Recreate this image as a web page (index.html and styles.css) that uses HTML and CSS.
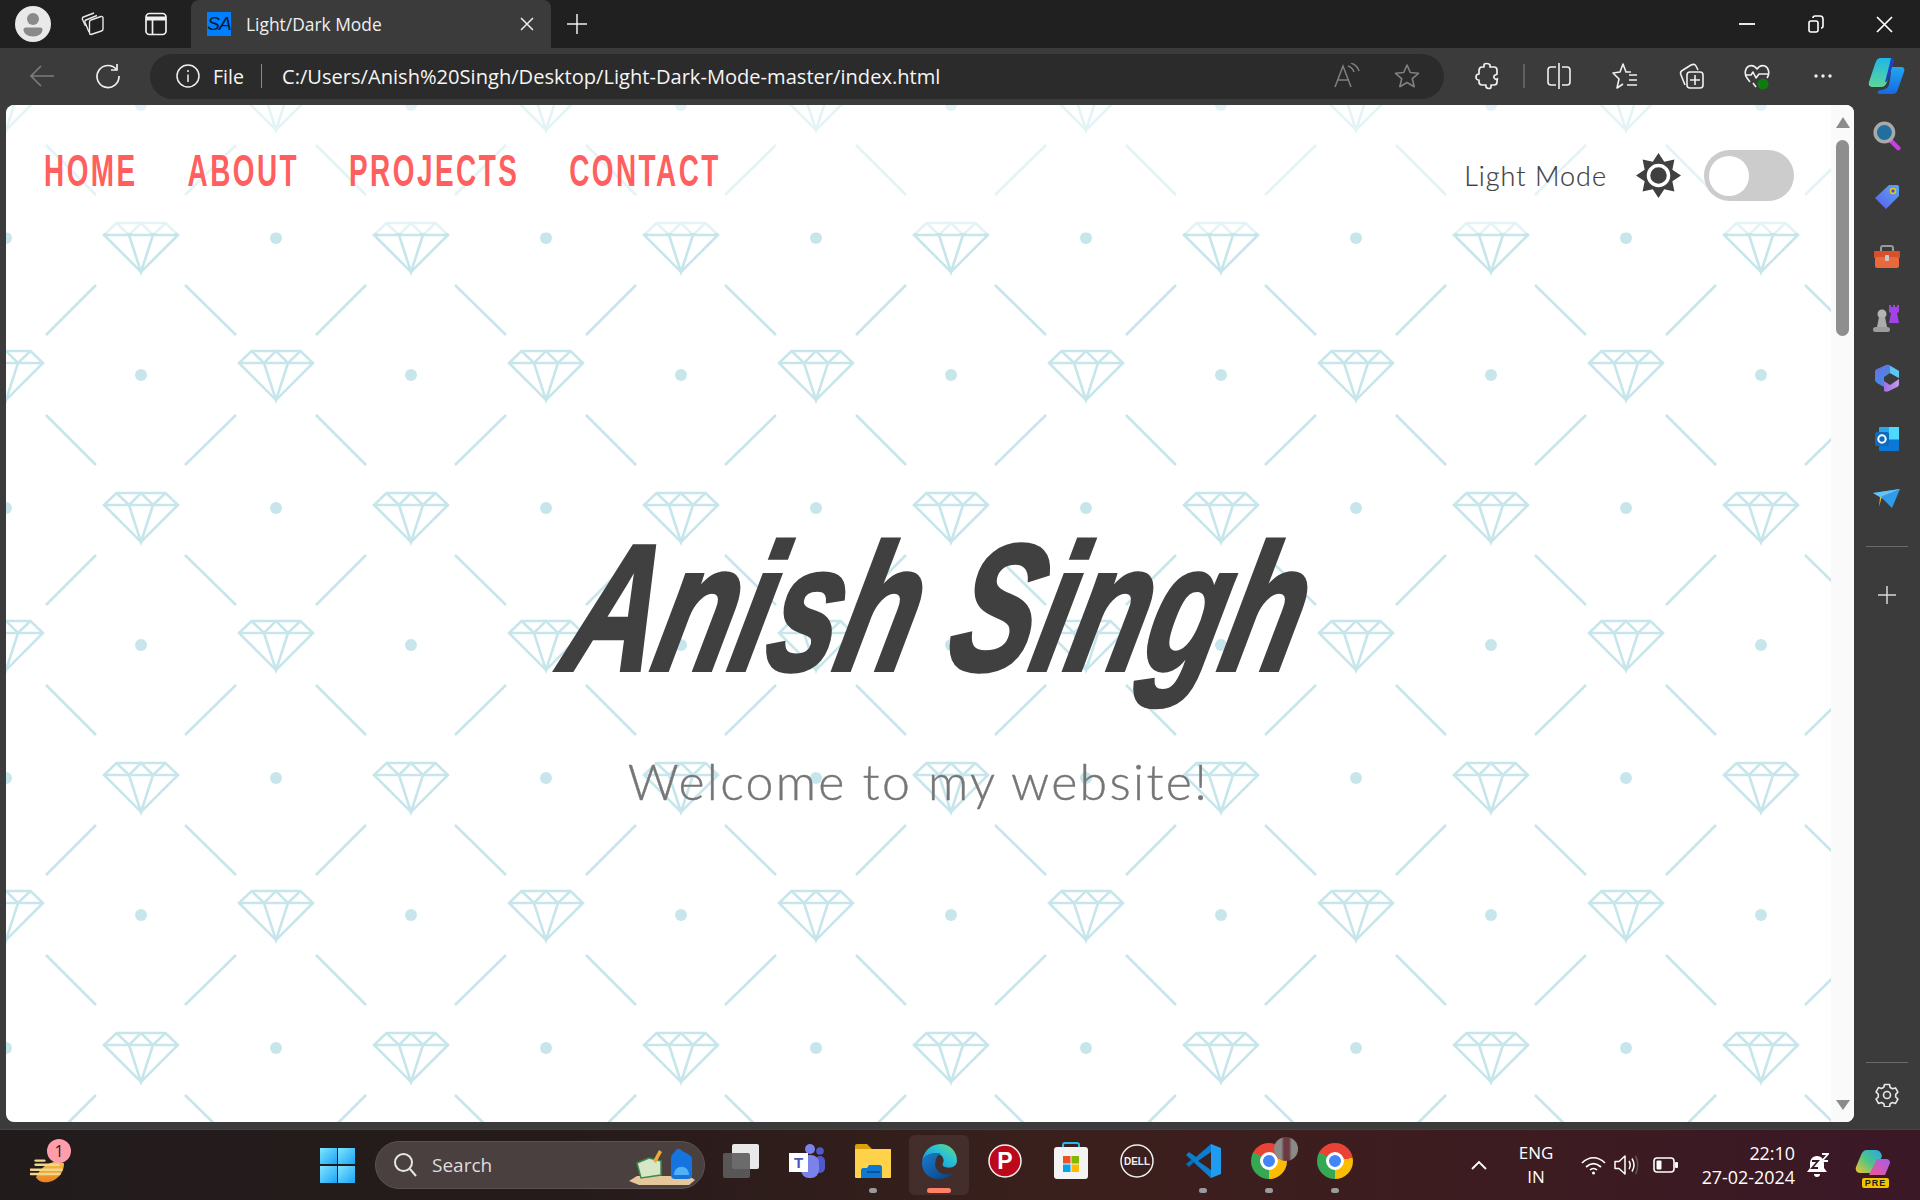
FILE: index.html
```html
<!DOCTYPE html>
<html lang="en">
<head>
<meta charset="utf-8">
<title>Light/Dark Mode</title>
<link rel="stylesheet" href="styles.css">
</head>
<body>
<div class="window">
  <header class="tabbar">
    <div class="avatar"><svg width="36" height="36" viewBox="0 0 36 36"><circle cx="18" cy="18" r="18" fill="#e9e9e9"/><circle cx="18" cy="13" r="6" fill="#8a8a8a"/><path d="M8.500 23.500a2 2 0 0 1 2-2h15a2 2 0 0 1 2 2c0 4-4 7-9.500 7s-9.500-3-9.500-7z" fill="#8a8a8a"/></svg></div>
    <div class="slot w48 ml18"><svg width="24" height="24" viewBox="0 0 24 24" fill="none" stroke="#e8e8e8" stroke-width="1.400" stroke-linejoin="round"><path d="M10 22.500 20.500 19a2 2 0 0 0 1.500-2V6a1.500 1.500 0 0 0-2-1.500L10 8a2 2 0 0 0-1.500 2v11a1.500 1.500 0 0 0 1.500 1.500z"/><path d="M8 20 4 10.500c-.5-1 0-2 1-2.500L16 3.500"/><path d="M4.500 14 1.500 7.500c-.5-1 0-2 1-2.500L13 1"/></svg></div>
    <div class="slot w48 ml15"><svg width="22" height="24" viewBox="0 0 22 24" fill="none" stroke="#f0f0f0" stroke-width="1.700"><rect x="1" y="1.500" width="20" height="21" rx="3.500"/><path d="M1 6.500h20" stroke-width="4"/><path d="M7.500 7v15"/></svg></div>
    <div class="tab">
      <span class="favicon">SA</span>
      <span class="tab-title">Light/Dark Mode</span>
      <span class="slot w24"><svg width="14" height="14" viewBox="0 0 14 14" stroke="#eee" stroke-width="1.500"><path d="M1 1l12 12M13 1 1 13"/></svg></span>
    </div>
    <div class="slot w40 ml6"><svg width="22" height="22" viewBox="0 0 22 22" stroke="#eee" stroke-width="1.500"><path d="M11 1v20M1 11h20"/></svg></div>
    <div class="winctrls">
      <div class="slot w69"><svg width="16" height="16" viewBox="0 0 16 16" stroke="#fff" stroke-width="1.800"><path d="M0 8h16"/></svg></div>
      <div class="slot w69"><svg width="16" height="18" viewBox="0 0 16 18" fill="none" stroke="#fff" stroke-width="1.600"><rect x="1" y="6" width="9" height="11" rx="2"/><path d="M5 3c0-1 1-2 2-2h5c2 0 3 1 3 3v7c0 1-1 2-2 2"/></svg></div>
      <div class="slot w69"><svg width="17" height="17" viewBox="0 0 17 17" stroke="#fff" stroke-width="1.700"><path d="M1 1l15 15M16 1 1 16"/></svg></div>
    </div>
  </header>

  <nav class="toolbar">
    <div class="slot w66 ml9"><svg width="26" height="26" viewBox="0 0 26 26" fill="none" stroke="#7d7d7d" stroke-width="1.600"><path d="M25 13H2M12 3 2 13l10 10"/></svg></div>
    <div class="slot w66"><svg width="26" height="26" viewBox="0 0 26 26" fill="none" stroke="#f0f0f0" stroke-width="1.700"><path d="M21.500 6.500A11 11 0 1 0 24 13"/><path d="M22 1v6h-6"/></svg></div>
    <div class="address">
      <svg class="info" width="24" height="24" viewBox="0 0 24 24" fill="none" stroke="#f0f0f0" stroke-width="1.500"><circle cx="12" cy="12" r="11"/><path d="M12 10.500V18M12 6v2"/></svg>
      <span class="file">File</span>
      <span class="addr-sep"></span>
      <span class="url">C:/Users/Anish%20Singh/Desktop/Light-Dark-Mode-master/index.html</span>
      <span class="slot w60 push"><svg width="26" height="26" viewBox="0 0 26 26" fill="none" stroke="#808080" stroke-width="1.500"><path d="M1 24 9 3l8 21M4 17h10"/><path d="M14 3c3 1 5 3 6 6M17 0c4 1.500 7 4 8 8" /></svg></span>
      <span class="slot w60"><svg width="26" height="26" viewBox="0 0 26 26" fill="none" stroke="#808080" stroke-width="1.600" stroke-linejoin="round"><path d="m13 2 3.300 7.500 8.200.8-6.200 5.400 1.900 8L13 19.500l-7.200 4.200 1.900-8-6.200-5.400 8.200-.8z"/></svg></span>
    </div>
    <div class="slot w66 ml10"><svg width="24" height="28" viewBox="0 0 24 28" fill="none" stroke="#f0f0f0" stroke-width="1.700" stroke-linejoin="round"><path d="M9 3c0-2 5-2 6 0v2h4c2 0 3 1 3 3v4c0 1-2 0-3 2s2 4 3 3 0 0 0 3c0 2-1 3-3 3h-3v2c0 2-4 2-5 0v-2H7c-2 0-3-1-3-3v-2c-2 0-3-1-3-3s1-3 3-3V9c0-2 1-4 3-4h2z"/></svg></div>
    <span class="bar-sep"></span>
    <div class="slot w66"><svg width="24" height="28" viewBox="0 0 24 28" fill="none" stroke="#f0f0f0" stroke-width="1.600"><path d="M9 5H4a3 3 0 0 0-3 3v12a3 3 0 0 0 3 3h5M15 5h5a3 3 0 0 1 3 3v12a3 3 0 0 1-3 3h-5M12 1v26"/></svg></div>
    <div class="slot w66"><svg width="26" height="28" viewBox="0 0 26 28" fill="none" stroke="#f0f0f0" stroke-width="1.600" stroke-linejoin="round"><path d="M19 10h-5L11 2 8 10l-7 1 6 6-2 9 6-4"/><path d="M17 13h8M17 18h8M15 23h10"/></svg></div>
    <div class="slot w66"><svg width="26" height="28" viewBox="0 0 26 28" fill="none" stroke="#f0f0f0" stroke-width="1.600" stroke-linejoin="round"><path d="M7 23 3 13c-1-2 0-4 2-5l8-5c2-1 4-1 5 1l2 4"/><rect x="9" y="10" width="16" height="16" rx="3"/><path d="M17 13v10M12 18h10"/></svg></div>
    <div class="slot w66"><svg width="26" height="28" viewBox="0 0 26 28" fill="none" stroke="#f0f0f0" stroke-width="1.600" stroke-linejoin="round"><path d="M6 20 3 16C0 12 1 6 5 4c3-1 6 0 8 3 2-3 5-4 8-3 4 2 5 8 2 12"/><path d="M1 13h6l2-3 3 6 3-4h9M9 21l3 4"/><circle cx="19" cy="22" r="5.500" fill="#107c10" stroke="none"/></svg></div>
    <div class="slot w66"><svg width="18" height="4" viewBox="0 0 18 4" fill="#f0f0f0"><circle cx="2" cy="2" r="1.700"/><circle cx="9" cy="2" r="1.700"/><circle cx="16" cy="2" r="1.700"/></svg></div>
    <div class="slot w60"><svg width="37" height="38" viewBox="0 0 37 38"><defs><linearGradient id="cpA" x1="0" y1="0" x2="0" y2="1"><stop offset="0" stop-color="#1fb6e6"/><stop offset="1" stop-color="#5ed69a"/></linearGradient><linearGradient id="cpB" x1="0" y1="0" x2="0" y2="1"><stop offset="0" stop-color="#21a8ef"/><stop offset="1" stop-color="#1668e3"/></linearGradient></defs><path d="M12 1h10c3 0 4 2 3 5l-6 19c-1 3-3 5-6 5H5c-3 0-5-2-4-5L7 7c1-4 3-6 5-6z" fill="url(#cpA)"/><path d="M20 10h13c3 0 4 2 3 5l-6 17c-1 4-3 5-6 5H12c-2 0-3-2-2-3l7-2c2-1 3-2 4-4l2-12z" fill="url(#cpB)"/><path d="M23 1c3 0 3 3 2 6l-4 13c-1 3-2 5-4 5l4-15z" fill="#1c3fc8"/></svg></div>
  </nav>

  <div class="workarea">
    <div class="viewport">
      <main class="page">
        <svg class="pattern" aria-hidden="true">
          <defs>
            <g id="gem" fill="none" stroke="#c6e6ec" stroke-width="2.600">
              <path d="M-24.500 1H24.500L37 13 0 50-37 13zM-37 13H37"/>
              <path d="M-24.500 1-12 13 0 1 12 13 24.500 1M-12 13 0 50 12 13"/>
            </g>
            <pattern id="tile" width="270" height="270" patternUnits="userSpaceOnUse">
              <g fill="#c6e6ec">
                <circle cx="135" cy="0" r="6"/><circle cx="135" cy="270" r="6"/>
                <circle cx="0" cy="133" r="6"/><circle cx="270" cy="133" r="6"/>
              </g>
              <g fill="none" stroke="#c6e6ec" stroke-width="2.600">
                <path d="M40 230 90 180M179 180 230 230M40 40 90 90M179 90 230 40"/>
              </g>
              <use href="#gem" x="135" y="117"/>
              <use href="#gem" x="0" y="245"/><use href="#gem" x="270" y="245"/>
              <use href="#gem" x="0" y="-25"/><use href="#gem" x="270" y="-25"/>
            </pattern>
          </defs>
          <rect width="100%" height="100%" fill="url(#tile)"/>
        </svg>
        <div class="site-nav">
          <ul class="links">
            <li>HOME</li><li>ABOUT</li><li>PROJECTS</li><li>CONTACT</li>
          </ul>
          <div class="theme">
            <span class="theme-label">Light Mode</span>
            <svg class="sun" width="45" height="45" viewBox="0 0 45 45"><polygon fill="#404040" points="22.500,0 28.240,8.640 38.410,6.590 36.360,16.760 45,22.500 36.360,28.240 38.410,38.410 28.240,36.360 22.500,45 16.760,36.360 6.590,38.410 8.640,28.240 0,22.500 8.640,16.760 6.590,6.590 16.760,8.640"/><circle cx="22.500" cy="22.500" r="10" fill="#404040" stroke="#fff" stroke-width="3.500"/></svg>
            <span class="switch"><span class="knob"></span></span>
          </div>
        </div>
        <section class="hero">
          <h1 class="name">Anish Singh</h1>
          <p class="welcome">Welcome to my website!</p>
        </section>
      </main>
      <aside class="scrollbar">
        <span class="arrow-up"></span>
        <span class="thumb"></span>
        <span class="arrow-down"></span>
      </aside>
    </div>
    <aside class="sidebar">
      <div class="side-slot"><svg width="28" height="30" viewBox="0 0 32 34"><path d="m20 22 9 9" stroke="#c93fe0" stroke-width="5" stroke-linecap="round"/><circle cx="13" cy="13" r="10.500" fill="#1f6f9f" stroke="#a9a9a9" stroke-width="4"/></svg></div>
      <div class="side-slot"><svg width="26" height="26" viewBox="0 0 26 26"><defs><linearGradient id="tagG" x1="1" y1="0" x2="0" y2="1"><stop offset="0" stop-color="#58a8f0"/><stop offset="1" stop-color="#5b5cf0"/></linearGradient></defs><path d="M15 1h8a2 2 0 0 1 2 2v9L12 25 1 14z" fill="url(#tagG)"/><circle cx="19" cy="7" r="2.500" fill="#315bd8" stroke="#f6c700" stroke-width="1.500"/></svg></div>
      <div class="side-slot"><svg width="28" height="24" viewBox="0 0 28 24"><path d="M8 6V3a2 2 0 0 1 2-2h8a2 2 0 0 1 2 2v3" fill="none" stroke="#9a9a9a" stroke-width="2"/><rect x="1" y="6" width="26" height="7" rx="1" fill="#d8502a"/><rect x="2" y="12" width="24" height="11" rx="2" fill="#e9683c"/><rect x="12" y="10" width="4" height="6" rx="1" fill="#c8c8c8"/></svg></div>
      <div class="side-slot"><svg width="30" height="30" viewBox="0 0 30 30"><circle cx="10" cy="11" r="4.500" fill="#b4b4b4"/><path d="M7 14h6l2 10H5z" fill="#acacac"/><rect x="1" y="24" width="17" height="5" rx="2.500" fill="#9c9c9c"/><path d="M17 2h2v2h2V2h2v2h2V2h2v7l-2 1 2 10H17l2-10-2-1z" fill="#a243ea"/></svg></div>
      <div class="side-slot"><svg width="26" height="28" viewBox="0 0 26 28"><defs><linearGradient id="msA" x1="0" y1="0" x2="1" y2="1"><stop offset="0" stop-color="#6f6be0"/><stop offset="1" stop-color="#2aa2e8"/></linearGradient><linearGradient id="msB" x1="0" y1="0" x2="1" y2="0"><stop offset="0" stop-color="#a06ee8"/><stop offset="1" stop-color="#c49be8"/></linearGradient></defs><path d="M3 5 12 1c2-.5 3 0 5 1l8 5v7l-9-5-6 4v10l-7-4c-1-1-2-2-2-3V9c0-2 0-3 2-4z" fill="url(#msA)"/><path d="M10 17l6 4 9-6v5c0 1-1 3-2 3l-8 4c-2 1-3 1-5 0z" fill="url(#msB)"/><path d="M16 2l9 5v7l-9-5z" fill="#5cc8ee"/></svg></div>
      <div class="side-slot"><svg width="26" height="26" viewBox="0 0 26 26"><rect x="5" y="1" width="20" height="14" rx="1" fill="#28a8ea"/><path d="M15 1h10v12H15z" fill="#50d9ff"/><path d="M5 14h20v10a1 1 0 0 1-1 1H6a1 1 0 0 1-1-1z" fill="#0a78d4"/><rect x="1" y="6" width="14" height="14" rx="1.500" fill="#0f6cbd"/><circle cx="8" cy="13" r="3.700" fill="none" stroke="#fff" stroke-width="2"/></svg></div>
      <div class="side-slot"><svg width="28" height="20" viewBox="0 0 28 20"><path d="M0 4 27 0 19 19 10 10z" fill="#2f9bea"/><path d="M0 4 27 0 7 8z" fill="#64c5f5"/><path d="M7 8 27 0 9 7 6 18z" fill="#f2b71c"/></svg></div>
      <hr class="side-sep">
      <div class="side-slot plus"><svg width="18" height="18" viewBox="0 0 18 18" stroke="#d8d8d8" stroke-width="1.500"><path d="M9 0v18M0 9h18"/></svg></div>
      <hr class="side-sep bottom">
      <div class="side-slot"><svg width="24" height="24" viewBox="0 0 24 24" fill="none" stroke="#e8e8e8" stroke-width="1.600" stroke-linejoin="round"><circle cx="12" cy="12" r="3.500"/><path d="M9.500 1.500h5l.7 3 2.300 1.300 3-.9 2.400 4.300-2.200 2.100v2.700l2.200 2.100-2.400 4.300-3-.9-2.300 1.300-.7 3h-5l-.7-3-2.300-1.300-3 .9-2.400-4.300 2.200-2.100v-2.700L1.100 8.900l2.400-4.300 3 .9 2.300-1.300z"/></svg></div>
    </aside>
  </div>

  <footer class="taskbar">
    <div class="weather">
      <svg width="36" height="28" viewBox="0 0 36 40" preserveAspectRatio="none"><defs><linearGradient id="wxG" x1="0" y1="0" x2="0" y2="1"><stop offset="0" stop-color="#f6c24c"/><stop offset="1" stop-color="#ec7f1d"/></linearGradient></defs><path d="M14 39C24 40 34 28 34 12c-8-6-22 0-28 20 2 4 4 6 8 7z" fill="url(#wxG)"/><path d="M6 8h8M6 14h22M1 21h30M1 27h28" stroke="#f1d78c" stroke-width="3.500" stroke-linecap="round"/></svg>
      <span class="badge">1</span>
    </div>
    <div class="winlogo"><i></i><i></i><i></i><i></i></div>
    <div class="search">
      <svg width="24" height="26" viewBox="0 0 24 26" fill="none" stroke="#e6e6e6" stroke-width="2"><circle cx="10.500" cy="10.500" r="8.500"/><path d="m17 17 6 7"/></svg>
      <span class="search-text">Search</span>
      <svg class="search-art" width="66" height="40" viewBox="0 0 66 40"><path d="M8 29h52l6 4-6 5H10l-10-4z" fill="#e6c79c"/><path d="M8 16 20 11l12 3v14l-20 3z" fill="#d8e6c8" stroke="#3d8a4e" stroke-width="1.500"/><path d="M24 14 30 3l3 2-6 11z" fill="#f0a836"/><path d="M42 28V12c0-5 4-7 6-10h3c2 3 12 5 12 10v16c0 3-2 4-4 4H46c-2 0-4-1-4-4z" fill="#1674e0"/><path d="M45 28c0-11 15-11 15 0z" fill="#52b0f5"/></svg>
    </div>
    <div class="apps">
      <div class="app"><svg width="38" height="36" viewBox="0 0 38 36"><rect x="10" y="1" width="27" height="25" rx="2" fill="#e9e9e9"/><rect x="1" y="10" width="27" height="25" rx="2" fill="#5d5d5d" fill-opacity=".9"/></svg></div>
      <div class="app"><svg width="36" height="34" viewBox="0 0 36 34"><circle cx="21" cy="5" r="5" fill="#7b83eb"/><circle cx="31" cy="7" r="3.800" fill="#5059c9"/><rect x="26" y="12" width="10" height="17" rx="5" fill="#5059c9"/><rect x="12" y="11" width="18" height="23" rx="8" fill="#7b83eb"/><rect x="0" y="9" width="19" height="19" fill="#fff"/><text x="9.500" y="24" class="teams-t">T</text></svg></div>
      <div class="app is-open"><svg width="36" height="34" viewBox="0 0 36 34"><path d="M0 2a2 2 0 0 1 2-2h10l5 5h19v6H0z" fill="#d9a20c"/><rect y="5" width="36" height="29" rx="1" fill="#ffd24a"/><path d="M6 34V26c0-1 1-2 2-2h4l2-3h11c1 0 2 1 2 2v11z" fill="#0f78d0"/><rect x="12" y="27" width="13" height="2" fill="#0a4f9c"/></svg></div>
      <div class="app active"><svg width="37" height="37" viewBox="0 0 36 36"><defs><linearGradient id="edT" x1="0" y1="1" x2="1" y2="0"><stop offset="0" stop-color="#0f86d6"/><stop offset=".6" stop-color="#2bc3d4"/><stop offset="1" stop-color="#6fdb6a"/></linearGradient><linearGradient id="edB" x1="0" y1="0" x2="1" y2="1"><stop offset="0" stop-color="#1a7cd0"/><stop offset="1" stop-color="#0b3f80"/></linearGradient></defs><path d="M1 20C1 9 9 1 19 1c9 0 16 7 16 16 0 5-4 7-8 7-3 0-6-1-6-3 0-1 1-2 1-4 0-4-4-7-8-7C8 10 1 14 1 20z" fill="url(#edT)"/><path d="M1 20c0 9 7 15 16 15 6 0 11-2 14-6-3 2-7 2-10 1-5-2-8-6-7-11 0-4 2-7 5-9C10 9 1 12 1 20z" fill="url(#edB)"/></svg></div>
      <div class="app"><svg width="34" height="34" viewBox="0 0 34 34"><circle cx="17" cy="17" r="16" fill="#bd081c" stroke="#f2f2f2" stroke-width="1.500"/><text x="17" y="25" class="pin-p">P</text></svg></div>
      <div class="app"><svg width="36" height="38" viewBox="0 0 36 38"><path d="M10 7V3a2 2 0 0 1 2-2h12a2 2 0 0 1 2 2v4" fill="none" stroke="#2db7ed" stroke-width="2"/><rect x="1" y="5" width="34" height="32" rx="3" fill="#f3f3f3"/><rect x="10" y="14" width="7.500" height="7.500" fill="#f25022"/><rect x="18.500" y="14" width="7.500" height="7.500" fill="#7fba00"/><rect x="10" y="22.500" width="7.500" height="7.500" fill="#00a4ef"/><rect x="18.500" y="22.500" width="7.500" height="7.500" fill="#ffb900"/></svg></div>
      <div class="app"><svg width="34" height="34" viewBox="0 0 34 34"><circle cx="17" cy="17" r="16" fill="none" stroke="#f0f0f0" stroke-width="1.500"/><text x="17" y="21" class="dell">DELL</text></svg></div>
      <div class="app is-open"><svg width="36" height="36" viewBox="0 0 36 36"><path d="M26 1 36 5v26l-10 4L10 20z" fill="#1f9cf0"/><path d="M26 1v34L1 12l3-3 7 5z" fill="#0a7ed0"/><path d="M10 18 4 24l-3-3 5-4z" fill="#0a6fb8"/><path d="M26 9 13 18l13 9z" fill="#3a2120"/></svg></div>
      <div class="app is-open"><span class="chrome"><span class="chrome-eye"></span></span><span class="thumb-badge"></span></div>
      <div class="app is-open"><span class="chrome"><span class="chrome-eye"></span></span></div>
    </div>
    <div class="tray">
      <div class="slot w34"><svg width="16" height="10" viewBox="0 0 16 10" fill="none" stroke="#fff" stroke-width="1.800"><path d="m1 9 7-7 7 7"/></svg></div>
      <div class="lang ml14"><span>ENG</span><span>IN</span></div>
      <div class="slot w34 ml14"><svg width="25" height="19" viewBox="0 0 25 19" fill="none" stroke="#fff" stroke-width="1.700"><path d="M1 7c7-7 16-7 23 0M5 11c5-4.500 10-4.500 15 0M9 14c2-2 5-2 7 0"/><circle cx="12.500" cy="17" r="1.500" fill="#fff" stroke="none"/></svg></div>
      <div class="slot w34"><svg width="26" height="22" viewBox="0 0 26 22" fill="none" stroke="#fff" stroke-width="1.500" stroke-linejoin="round"><path d="M1 7.500h4L11 2v18l-6-5.500H1zM15 7c1.500 2.500 1.500 5.500 0 8M18 4.500c2.500 4 2.500 9 0 13"/><path d="M21.500 2c3 5 3 13 0 18" stroke="#6a5058"/></svg></div>
      <div class="slot w34 ml4"><svg width="25" height="16" viewBox="0 0 25 16"><rect x="1" y="1" width="20" height="14" rx="3" fill="none" stroke="#fff" stroke-width="1.600"/><rect x="3.500" y="3.500" width="5" height="9" rx="1" fill="#fff"/><rect x="22" y="5" width="3" height="6" rx="1" fill="#fff"/></svg></div>
      <div class="clock ml13"><span>22:10</span><span>27-02-2024</span></div>
      <div class="slot w34 ml6"><svg width="22" height="26" viewBox="0 0 22 26"><path d="M10 4c5 0 7 4 7 8v4l3 4H0l3-4v-4c0-4 2-8 7-8z" fill="#fff"/><path d="M7 22h6a3 3 0 0 1-6 0z" fill="#fff"/><path d="M15 2h6l-6 7h6" fill="none" stroke="#fff" stroke-width="1.800"/><path d="M5 9h6l-6 7h6" fill="none" stroke="#3a1a26" stroke-width="1.800"/></svg></div>
      <div class="copilot ml18"><svg width="36" height="32" viewBox="0 0 36 32"><defs><linearGradient id="cpC" x1="0" y1="1" x2="1" y2="0"><stop offset="0" stop-color="#f5c22e"/><stop offset=".5" stop-color="#4dc488"/><stop offset="1" stop-color="#2aa6e8"/></linearGradient><linearGradient id="cpD" x1="0" y1="1" x2="1" y2="0"><stop offset="0" stop-color="#f0568c"/><stop offset="1" stop-color="#a45df0"/></linearGradient></defs><path d="M12 1h9c3 0 5 2 6 6l-7 17H5c-3 0-5-3-4-6L6 6c1-3 3-5 6-5z" fill="url(#cpC)"/><path d="M22 10h9c3 0 4 2 4 4l-5 12H14z" fill="url(#cpD)"/></svg><span class="pre">PRE</span></div>
    </div>
  </footer>
</div>
</body>
</html>
```
FILE: styles.css
```css
* { box-sizing: border-box; }
html, body { margin: 0; padding: 0; }
body { font-family: "Open Sans", "Noto Sans", sans-serif; background: #3b3b3b; overflow: hidden; }
.window { width: 1920px; height: 1200px; display: flex; flex-direction: column; }

.slot { display: flex; align-items: center; justify-content: center; flex: none; }
.w24 { width: 24px; } .w34 { width: 34px; } .w40 { width: 40px; } .w48 { width: 48px; }
.w60 { width: 60px; } .w66 { width: 66px; } .w69 { width: 69px; }
.ml4 { margin-left: 4px; } .ml6 { margin-left: 6px; } .ml9 { margin-left: 9px; } .ml10 { margin-left: 10px; }
.ml13 { margin-left: 13px; } .ml14 { margin-left: 14px; } .ml15 { margin-left: 15px; } .ml18 { margin-left: 18px; }

/* tab strip */
.tabbar { height: 48px; flex: none; background: #202020; display: flex; align-items: center; padding-left: 15px; }
.avatar { width: 36px; height: 36px; flex: none; }
.tab { margin-left: 11px; width: 360px; height: 48px; background: #3b3b3b; border-radius: 8px 8px 0 0; display: flex; align-items: center; padding: 0 12px 0 16px; }
.favicon { width: 24px; height: 24px; background: #0080ff; color: #001a33; font: italic 19px/24px "Liberation Sans", sans-serif; text-align: center; letter-spacing: -1px; flex: none; }
.tab-title { flex: 1; margin-left: 15px; color: #f0f0f0; font-size: 17.400px; }
.winctrls { margin-left: auto; display: flex; padding-right: 1px; }

/* toolbar */
.toolbar { height: 57px; flex: none; background: #3b3b3b; display: flex; align-items: center; padding-bottom: 1px; }
.address { margin-left: 9px; width: 1294px; height: 45px; border-radius: 23px; background: #2b2b2b; display: flex; align-items: center; padding: 0 7px 0 26px; flex: none; color: #f5f5f5; }
.info { flex: none; }
.file { margin-left: 13px; font-size: 19.500px; width: 31px; }
.addr-sep { margin-left: 17px; width: 1px; height: 24px; background: #8a8a8a; }
.url { margin-left: 20px; font-size: 20.100px; white-space: nowrap; }
.push { margin-left: auto; }
.bar-sep { width: 2px; height: 24px; background: #5f5f5f; margin: 0 1px 0 3px; flex: none; }

/* main */
.workarea { height: 1024px; flex: none; display: flex; }
.viewport { margin: 0 0 7px 6px; width: 1848px; display: flex; border-radius: 8px; overflow: hidden; background: #fff; }
.page { position: relative; flex: 1; overflow: hidden; }
.pattern { position: absolute; left: 0; top: 0; width: 100%; height: 100%; display: block; }

.site-nav { position: relative; height: 128px; background: rgba(255,255,255,.5); display: flex; align-items: center; justify-content: space-between; padding: 0 37px 0 38px; }
.links { list-style: none; margin: 3px 0 0; padding: 0; display: flex; gap: 80.500px; color: #ff5f5f; font: bold 45px/1 "Liberation Sans", sans-serif; letter-spacing: 4px; transform: scaleX(.62); transform-origin: left center; white-space: nowrap; }
.theme { display: flex; align-items: center; margin-top: 13px; }
.theme-label { font: 300 27px/1 Lato, sans-serif; letter-spacing: 1px; color: #404040; -webkit-text-stroke: .2px #404040; }
.sun { margin-left: 29px; flex: none; }
.switch { margin-left: 23px; width: 90px; height: 51px; border-radius: 26px; background: #ccc; display: flex; align-items: center; padding-left: 5px; }
.knob { width: 40px; height: 40px; border-radius: 50%; background: #fff; }

.hero { position: relative; display: flex; flex-direction: column; align-items: center; padding-top: 285px; }
.name { margin: 0; font: italic bold 180px/1 "Liberation Sans", sans-serif; color: #404040; -webkit-text-stroke: 4px #404040; transform: translateX(21px) scaleX(.7) skewX(-19deg); white-space: nowrap; }
.welcome { margin: 53px 0 0; font: 300 50px/1.2 Lato, sans-serif; letter-spacing: 2.300px; color: #767676; -webkit-text-stroke: .4px #767676; white-space: nowrap; }

.scrollbar { width: 23px; flex: none; background: #fafafa; display: flex; flex-direction: column; align-items: center; padding: 12px 0; }
.arrow-up, .arrow-down { width: 0; height: 0; border-left: 7.500px solid transparent; border-right: 7.500px solid transparent; flex: none; }
.arrow-up { border-bottom: 11px solid #8c8c8c; }
.arrow-down { border-top: 10px solid #8c8c8c; margin-top: auto; }
.thumb { width: 13px; height: 196px; margin-top: 12px; border-radius: 7px; background: #8e8e8e; flex: none; }

/* sidebar */
.sidebar { width: 66px; flex: none; display: flex; flex-direction: column; align-items: center; padding: 1px 0 4px; }
.side-slot { height: 60.500px; width: 100%; display: flex; align-items: center; justify-content: center; flex: none; }
.side-sep { width: 42px; height: 1px; margin: 16px 0 0; border: 0; background: #6a6a6a; flex: none; }
.side-sep.bottom { margin: auto 0 2px; }
.plus { margin-top: 18px; }

/* taskbar */
.taskbar { height: 71px; flex: none; display: flex; align-items: center; border-top: 1px solid #4c4040; background: linear-gradient(90deg, #221b1c 0, #261b1b 30%, #3a201c 55%, #3d1c20 75%, #3a1826 100%); color: #fff; }
.weather { position: relative; width: 96px; flex: none; display: flex; justify-content: center; padding-top: 8px; }
.badge { position: absolute; left: 47px; top: -8px; width: 24px; height: 24px; border-radius: 50%; background: #ff9dab; color: #2a1a1a; font-size: 16px; line-height: 24px; text-align: center; }
.winlogo { margin-left: 224px; width: 35px; height: 35px; display: grid; grid-template-columns: 1fr 1fr; gap: 1.500px; flex: none; }
.winlogo i { background: linear-gradient(135deg, #7fe6ff, #1aa3f5); display: block; }
.search { margin-left: 20px; width: 330px; height: 48px; flex: none; border-radius: 24px; background: #4a4040; border: 1px solid #5c5252; display: flex; align-items: center; padding-left: 17px; position: relative; }
.search-text { margin-left: 15px; font-size: 19px; color: #dedede; }
.search-art { position: absolute; right: 9px; top: 5px; }
.apps { margin-left: 3px; display: flex; flex: none; }
.app { position: relative; width: 66px; height: 60px; display: flex; align-items: center; justify-content: center; padding-bottom: 8px; }
.app.is-open::after { content: ""; position: absolute; left: 29px; bottom: 2px; width: 8px; height: 5px; border-radius: 3px; background: #9b9b9b; }
.active { width: 60px; margin: 0 3px; background: rgba(255,255,255,.07); border-radius: 6px; }
.active::after { content: ""; position: absolute; left: 18px; bottom: 2px; width: 24px; height: 5px; border-radius: 3px; background: #ff8066; }
.teams-t { font: bold 15px "Liberation Sans", sans-serif; fill: #4b53bc; text-anchor: middle; }
.pin-p { font: bold 23px "Liberation Sans", sans-serif; fill: #fff; text-anchor: middle; }
.dell { font: bold 10px "Liberation Sans", sans-serif; fill: #f0f0f0; text-anchor: middle; }
.chrome { width: 36px; height: 36px; border-radius: 50%; display: flex; align-items: center; justify-content: center; background: conic-gradient(from -60deg, #ea4335 0 140deg, #fbbc04 140deg 240deg, #34a853 240deg 360deg); }
.chrome-eye { width: 18px; height: 18px; border-radius: 50%; background: #4285f4; border: 3px solid #fff; box-sizing: border-box; }
.thumb-badge { position: absolute; left: 38px; top: 2px; width: 24px; height: 24px; border-radius: 50%; background: linear-gradient(90deg, #8a8a8a 30%, #6a3a40 42% 62%, #8a8a8a 74%); }
.tray { margin-left: auto; display: flex; align-items: center; padding-right: 27px; }
.lang { width: 52px; display: flex; flex-direction: column; align-items: center; font-size: 17px; line-height: 24px; }
.clock { width: 100px; display: flex; flex-direction: column; align-items: flex-end; font-size: 17.900px; line-height: 24px; }
.copilot { position: relative; width: 40px; display: flex; justify-content: center; }
.pre { position: absolute; left: 9px; bottom: -7px; width: 27px; height: 10px; border-radius: 2px; background: #f5c000; color: #1a1a1a; font: bold 9px/10px "Liberation Sans", sans-serif; text-align: center; letter-spacing: 1px; }
```
